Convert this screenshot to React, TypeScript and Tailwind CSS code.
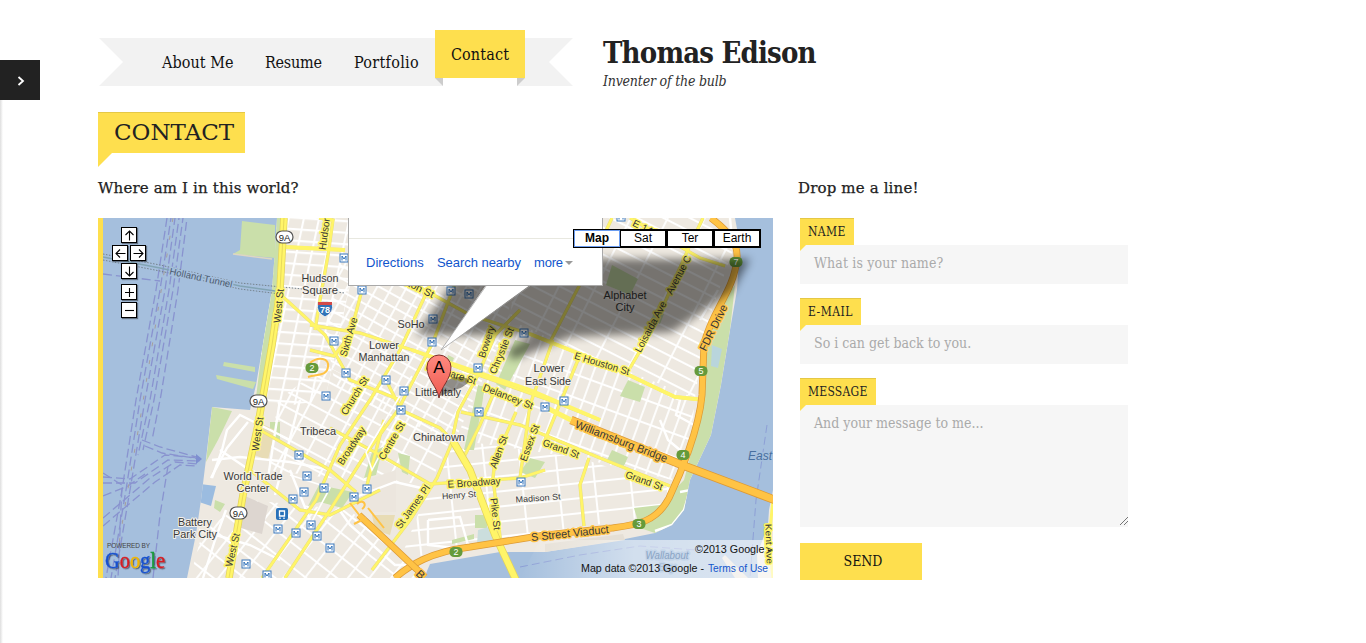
import React from "react";

const slab = "font-['DejaVu_Serif_Condensed','DejaVu_Serif',serif]";
const slabWide = "font-['DejaVu_Serif',serif]";

type Label = { t: string; x: number; y: number; w: number; r?: number; s?: number; halo?: string; fill?: string; italic?: boolean };

const Y = "#fff568";
const O = "#ffc345";
const labels: Label[] = [
  { t: "Holland Tunnel", x: 201, y: 281, w: 64, r: 12, s: 9.5, halo: "#a5bfdd", fill: "#4b5a6e" },
  { t: "Hudson", x: 320, y: 282, w: 37 },
  { t: "Square", x: 320, y: 294, w: 36 },
  { t: "SoHo", x: 411, y: 328, w: 27 },
  { t: "Lower", x: 384, y: 349, w: 30 },
  { t: "Manhattan", x: 384, y: 361, w: 51 },
  { t: "Little Italy", x: 438, y: 396, w: 46 },
  { t: "Lower", x: 549, y: 372, w: 31 },
  { t: "East Side", x: 548, y: 385, w: 46 },
  { t: "Alphabet", x: 625, y: 299, w: 43, halo: "#00000000" },
  { t: "City", x: 625, y: 311, w: 19, halo: "#00000000" },
  { t: "Chinatown", x: 439, y: 441, w: 52 },
  { t: "Tribeca", x: 318, y: 435, w: 36 },
  { t: "World Trade", x: 253, y: 480, w: 59 },
  { t: "Center", x: 253, y: 492, w: 33 },
  { t: "Battery", x: 195, y: 526, w: 34 },
  { t: "Park City", x: 195, y: 538, w: 44 },
  { t: "Henry St", x: 459, y: 498, w: 34, r: -4, s: 8.5 },
  { t: "Madison St", x: 538, y: 501, w: 45, r: -4, s: 8.5 },
  { t: "West St", x: 279, y: 309, w: 34, r: -84, s: 10, halo: Y },
  { t: "West St", x: 258, y: 437, w: 34, r: -82, s: 10, halo: Y },
  { t: "West St", x: 233, y: 553, w: 34, r: -77, s: 10, halo: Y },
  { t: "Hudson", x: 325, y: 236, w: 34, r: -82, s: 10, halo: Y },
  { t: "Sixth Ave", x: 349, y: 340, w: 40, r: -74, s: 10, halo: Y },
  { t: "Church St", x: 355, y: 399, w: 43, r: -58, s: 10, halo: Y },
  { t: "Broadway", x: 352, y: 449, w: 43, r: -57, s: 10, halo: Y },
  { t: "Centre St", x: 392, y: 444, w: 42, r: -60, s: 10, halo: Y },
  { t: "St James Pl", x: 413, y: 510, w: 51, r: -54, s: 10, halo: Y },
  { t: "Kenmare St", x: 451, y: 377, w: 52, r: 17, s: 10, halo: Y },
  { t: "Houston St", x: 410, y: 287, w: 52, r: 26, s: 10, halo: Y },
  { t: "Delancey St", x: 508, y: 400, w: 53, r: 21, s: 10, halo: Y },
  { t: "Bowery", x: 487, y: 345, w: 33, r: -72, s: 10, halo: Y },
  { t: "Chrystie St", x: 502, y: 354, w: 49, r: -68, s: 10, halo: Y },
  { t: "Allen St", x: 499, y: 455, w: 34, r: -70, s: 10, halo: Y },
  { t: "Essex St", x: 530, y: 446, w: 38, r: -70, s: 10, halo: Y },
  { t: "Pike St", x: 495, y: 517, w: 32, r: 84, s: 10, halo: Y },
  { t: "E Broadway", x: 474, y: 486, w: 53, r: -4, s: 10, halo: Y },
  { t: "E Houston St", x: 602, y: 367, w: 57, r: 17, s: 10, halo: Y },
  { t: "Grand St", x: 561, y: 452, w: 38, r: 20, s: 10, halo: Y },
  { t: "Grand St", x: 644, y: 484, w: 39, r: 20, s: 10, halo: Y },
  { t: "Loisaida Ave", x: 651, y: 330, w: 56, r: -62, s: 10, halo: Y },
  { t: "Avenue C", x: 679, y: 278, w: 42, r: -62, s: 10, halo: Y },
  { t: "E 14th St", x: 652, y: 235, w: 42, r: 26, s: 10, halo: Y },
  { t: "FDR Drive", x: 714, y: 331, w: 50, r: -64, s: 11, halo: O },
  { t: "Williamsburg Bridge", x: 621, y: 445, w: 98, r: 21, s: 11, halo: O },
  { t: "S Street Viaduct", x: 570, y: 537, w: 78, r: -6, s: 11, halo: O },
  { t: "B", x: 420, y: 578, w: 8, r: 43, s: 11, halo: O },
  { t: "Kent Ave", x: 769, y: 547, w: 40, r: 88, s: 9, halo: Y },
  { t: "East", x: 760, y: 460, w: 24, s: 12, fill: "#486f9f", halo: "#a5bfdd", italic: true },
  { t: "Wallabout", x: 667, y: 559, w: 43, s: 10.5, fill: "#8aa4c4", halo: "#c4d5e9", italic: true },
  { t: "Bay", x: 667, y: 571, w: 17, s: 10.5, fill: "#a9bdd6", halo: "#c4d5e9", italic: true },
];

const metros = [
  [344, 258], [362, 290], [334, 341], [346, 373], [326, 396], [386, 380], [404, 391], [432, 342], [433, 319], [451, 291],
  [469, 294], [524, 333], [478, 368], [621, 217], [564, 401], [299, 455], [307, 476], [324, 488], [304, 492], [293, 499],
  [278, 529], [296, 533], [311, 525], [317, 536], [246, 564], [267, 575], [401, 410], [479, 412], [367, 489], [354, 497],
  [330, 548], [521, 482], [545, 407],
];

const yellowStreets = [
  "M319 218L333 220L328 255L320 300L315 330",
  "M285 247L345 250",
  "M282 296L325 335L350 380L400 400",
  "M372 218L362 290L350 335L334 356L310 350",
  "M310 325L360 333L412 350L470 372L560 404L600 420",
  "M360 262L410 282L470 315L530 334L610 366L675 397L705 400",
  "M480 218L433 342L398 410L365 455L330 510L285 578",
  "M430 285L400 350L370 400L340 445L316 500L262 578",
  "M520 310L495 335L478 375L458 412L452 440",
  "M495 390L480 425L465 455",
  "M386 380L401 410L440 428L452 440",
  "M453 440L437 478L410 520L372 570",
  "M260 430L330 470L356 492",
  "M330 428L380 455L430 484L520 478L545 470",
  "M250 470L300 510L330 515L380 490",
  "M516 412L495 460L493 478L501 545",
  "M553 340L530 405L520 478",
  "M580 355L545 440",
  "M461 412L520 425L600 458L670 486",
  "M589 458L580 485L584 526",
  "M630 368L655 325L690 245L703 218",
  "M550 342L590 265L612 218",
  "M630 218L700 258L725 266",
  "M384 420L366 489",
];

const pale = ["M412 376L366 452L372 470L384 447", "M290 475L330 488L310 525"];

const coast =
  "M277 218H735L740 245L737 290L730 330L721 385L711 435L690 480L684 510L672 525L655 533L620 540L545 552L500 552L430 564L424 578H187L196 534L201 500L206 459L212 407L250 410L256 385L262 350L272 290L275 250Z";

function Shape({ x, y, n }: { x: number; y: number; n: string }) {
  return (
    <g>
      <rect x={x - 6.5} y={y - 5} width={13} height={10} rx={4.5} fill="#659a3b" />
      <text x={x} y={y + 3.2} textAnchor="middle" fontSize={9} fill="#fff">{n}</text>
    </g>
  );
}

function MapDrawing() {
  return (
    <svg viewBox="103 218 670 360" className="block h-[360px] w-[670px] font-['Liberation_Sans',sans-serif]">
      <defs>
        <clipPath id="land"><path d={coast} /></clipPath>
        <pattern id="gWest" width="15" height="11.5" patternUnits="userSpaceOnUse" patternTransform="rotate(4) skewX(-8)">
          <path d="M0 1H15M1 0V11.5" stroke="#fff" strokeWidth="2.2" />
        </pattern>
        <pattern id="gSoho" width="26" height="11" patternUnits="userSpaceOnUse" patternTransform="rotate(29)">
          <path d="M0 1H26M1 0V11M14 0V11" stroke="#fff" strokeWidth="1.8" />
        </pattern>
        <pattern id="gEast" width="33" height="12" patternUnits="userSpaceOnUse" patternTransform="rotate(27)">
          <path d="M0 1H33M1 0V12" stroke="#fff" strokeWidth="1.8" />
        </pattern>
        <pattern id="gLes" width="12" height="22" patternUnits="userSpaceOnUse" patternTransform="rotate(20)">
          <path d="M0 1H12M1 0V22" stroke="#fff" strokeWidth="1.8" />
        </pattern>
        <pattern id="gSouth" width="36" height="15" patternUnits="userSpaceOnUse" patternTransform="rotate(-6)">
          <path d="M0 1H36M1 0V15" stroke="#fff" strokeWidth="1.9" />
        </pattern>
        <pattern id="gFin" width="17" height="19" patternUnits="userSpaceOnUse" patternTransform="rotate(38)">
          <path d="M0 1H17M1 0V19" stroke="#fff" strokeWidth="1.8" />
        </pattern>
        <pattern id="gTri" width="21" height="14" patternUnits="userSpaceOnUse" patternTransform="rotate(28)">
          <path d="M0 1H21M1 0V14" stroke="#fff" strokeWidth="1.9" />
        </pattern>
        <filter id="soft" x="-10%" y="-20%" width="120%" height="140%"><feGaussianBlur stdDeviation="4.5" /></filter>
        <filter id="drop" x="-10%" y="-20%" width="120%" height="150%"><feDropShadow dx="1.2" dy="1.2" stdDeviation="0.5" floodOpacity=".45" /></filter>
        <linearGradient id="fade"><stop offset="0" stopColor="#fff" stopOpacity="0" /><stop offset=".45" stopColor="#fff" stopOpacity=".5" /><stop offset="1" stopColor="#fff" stopOpacity=".6" /></linearGradient>
        <linearGradient id="pin" x1="0" y1="0" x2="0" y2="1"><stop offset="0" stopColor="#ff8a80" /><stop offset="1" stopColor="#ee5a50" /></linearGradient>
      </defs>
      <rect x="103" y="218" width="670" height="360" fill="#a5bfdd" />

      <g stroke="#8993cf" strokeWidth="1.3" strokeDasharray="9 4" fill="none">
        <path d="M167 218L156 290L136 400L122 490L106 578" />
        <path d="M171 218L160 290L140 400L126 490L111 578" strokeDashoffset="5" />
        <path d="M175 218L165 290L145 400L130 490L115 578" strokeDashoffset="2" />
        <path d="M179 218L169 290L150 400L138 455" strokeDashoffset="7" />
        <path d="M183 218L173 290L154 400L143 450" strokeDashoffset="4" />
        <path d="M187 218L178 290L161 395L152 440" strokeDashoffset="9" />
        <path d="M103 274L160 281" />
        <path d="M142 440L160 447L200 458M145 446L162 453L200 459M103 477L130 479L165 455L200 458M103 483L135 483L168 460L200 461M103 518L150 478L175 462L198 464M103 526L155 482L180 465L198 466M103 496L128 486L145 474" />
        <path d="M168 466L160 515L153 578M103 473L122 485L118 578" />
      </g>
      <path d="M173 218L158 310L140 420L126 500L118 550" stroke="#a79f9b" strokeDasharray="4 14" fill="none" />
      <path d="M196 454L202 459L196 464Z" fill="#7d8fd0" />

      <path d={coast} fill="#eee9e1" />
      <g clipPath="url(#land)">
        <path d="M278 218H355V262L325 400L260 410V350Z" fill="url(#gWest)" />
        <path d="M358 218H500L510 320L455 440L400 420L335 385L325 330L340 262Z" fill="url(#gSoho)" />
        <path d="M520 218H715L733 250L705 330L695 398L575 350L510 320Z" fill="url(#gEast)" />
        <path d="M510 320L575 350L695 398L692 430L672 480L580 458L457 440L478 375Z" fill="url(#gLes)" />
        <path d="M457 440L580 458L670 487L658 515L500 540L400 560L430 484Z" fill="url(#gSouth)" />
        <path d="M325 365L400 405L450 440L430 484L345 480L268 470L278 400Z" fill="url(#gTri)" />
        <path d="M250 500L350 510L420 578H190L203 530Z" fill="url(#gFin)" />

        <g fill="#cadfaa">
          <path d="M212 407L232 411L218 440L206 462Z" />
          <path d="M275 218H281L274 330L262 400L255 405L262 350Z" />
          <path d="M735 285L730 330L721 385L711 435L690 480L684 510L672 525L655 533L640 528L634 508L660 505L684 480L700 420L704 345L724 300Z" />
          <path d="M319 485L353 492L342 508L320 502L308 506Z" />
          <path d="M372 452L383 447L376 475L364 478Z" />
          <path d="M398 453L410 456L408 475L402 472Z" />
          <path d="M478 385L485 387L474 450L464 450Z" />
          <path d="M515 340L530 344L505 390L496 384Z" />
          <path d="M612 265L638 279L630 295L606 285Z" />
          <path d="M530 458L545 462L535 478L520 472Z" />
          <path d="M628 380L645 387L640 402L620 396Z" />
          <path d="M475 515H487V528H475Z" />
          <path d="M270 422H280V440H270ZM215 500L225 504L220 512L214 508Z" />
          <path d="M448 355L454 358L450 368L445 365ZM655 310L664 314L660 324L651 320Z" />
          <path d="M612 450L628 457L624 466L607 460ZM452 540L474 534V539L452 544Z" />
        </g>
        <path d="M478 530L492 526L496 541L477 545Z" fill="#cbdedd" />
        <path d="M712 345L722 349L718 368L711 366Z" fill="#b9d5dc" />
        <path d="M245 496L268 506L262 534L237 527Z" fill="#ddd6d0" />
        <path d="M260 423L275 430L268 460L254 455Z" fill="#e8dcb5" />
        <path d="M372 515L395 515L390 535L375 530Z" fill="#e8dcb5" />
        <path d="M372 478L396 470L396 512L372 512L362 502Z" fill="#ece6de" />
        <path d="M200 484L216 486L211 506L199 502Z" fill="#9bbce0" />
        <g fill="none" stroke="#fff" strokeWidth="2.4">
          <path d="M212 478L222 450L227 430L240 415L258 424L290 440" />
          <path d="M212 460L240 457L290 462L330 470M220 450L245 467L270 480" />
          <path d="M248 422L227 448L211 478" />
          <path d="M226 510L215 540L203 578M199 530L250 545L280 560" />
          <path d="M338 508L350 525L395 565L410 565M356 497L395 482L430 490" />
          <path d="M428 520L460 517L468 545M428 520V545L455 548" />
          <path d="M680 492L690 490L684 510L672 525L655 531" />
          <path d="M280 400L268 478M300 400L275 495M290 470L310 520" />
          <path d="M668 395L680 400L676 415L694 425M660 420L668 440L680 450" />
          <path d="M730 218L733 250M718 290L700 320" />
        </g>
      </g>

      <g fill="#cadfaa">
        <path d="M242 221L275 225V258L233 254L240 250Z" />
        <path d="M224 362L255 367L255 372L223 366Z" />
        <path d="M216 375L256 382L253 389L217 379Z" />
      </g>
      <path d="M233 254L272 259" stroke="#ded6c3" strokeWidth="1.5" />
      <path d="M773 490L769 510L768 525L757 555L758 578H773Z" fill="#eee9e1" />
      <path d="M725 555L748 578H735L722 558Z" fill="#e7e2da" />
      <path d="M767 425L756 500L750 578" stroke="#8d9fd6" strokeDasharray="8 4" fill="none" />
      <path d="M520 567L580 555L640 546L710 551" stroke="#8d9fd6" strokeDasharray="8 4" fill="none" />
      <path d="M545 544L623 534L625 540L545 552Z" fill="#e5dfd5" />

      <g fill="none" strokeDasharray="1.5 1.5" stroke="#75828d">
        <path d="M103 254L160 265L240 283L345 293" />
        <path d="M103 260L160 271L240 289L280 294" />
      </g>
      <path d="M103 257L160 268L240 286L275 291" stroke="#82a4b4" strokeWidth="1.4" fill="none" />

      <g clipPath="url(#land)" fill="none">
        <g stroke="#e7dc83" strokeWidth="3.4">{yellowStreets.map((d) => <path key={d} d={d} />)}</g>
        <g stroke={Y} strokeWidth="2.5">{yellowStreets.map((d) => <path key={d} d={d} />)}</g>
        <g stroke="#fff" strokeWidth="1.6">{pale.map((d) => <path key={d} d={d} />)}</g>
        <path d="M285 247L345 250M412 350L530 390L600 420M530 334L610 366L675 397L705 400" stroke={Y} strokeWidth="3.8" />
      </g>
      <path d="M284 218L280 290L272 345L258 425L243 495L229 578" stroke="#e4d45b" strokeWidth="7.5" fill="none" />
      <path d="M284 218L280 290L272 345L258 425L243 495L229 578" stroke={Y} strokeWidth="6" fill="none" />
      <path d="M284 218L280 290L272 345L258 425L243 495L229 578" stroke="#e8d95c" strokeWidth="1" fill="none" />
      <path d="M453 441L470 470L495 535L516 580" stroke="#e4d45b" strokeWidth="7.5" fill="none" />
      <path d="M453 441L470 470L495 535L516 580" stroke={Y} strokeWidth="6" fill="none" />
      <path d="M773 500L769 540L773 578" stroke={Y} strokeWidth="3" fill="none" />

      <g fill="none" strokeLinejoin="round">
        <path d="M310 363C318 356 330 358 328 367C327 376 318 374 308 377" stroke="#ffc345" strokeWidth="2" />
        <g stroke="#dd9a35" strokeWidth="7">
          <path d="M711 218C728 231 738 242 737 258C734 292 712 310 704 344L702 395C699 430 680 475 669 498C656 523 635 525 612 528L545 535L470 547C430 552 410 565 395 578" />
          <path d="M571 420L682 465L775 500" strokeWidth="8.5" />
        </g>
        <g stroke={O} strokeWidth="5.5">
          <path d="M711 218C728 231 738 242 737 258C734 292 712 310 704 344L702 395C699 430 680 475 669 498C656 523 635 525 612 528L545 535L470 547C430 552 410 565 395 578" />
          <path d="M571 420L682 465L775 500" strokeWidth="7" />
        </g>
        <path d="M545 407L571 420" stroke={Y} strokeWidth="5" />
        <path d="M359 515L425 577" stroke="#dd9a35" strokeWidth="7" />
        <path d="M359 515L425 577" stroke={O} strokeWidth="5.5" />
        <path d="M350 503L360 516M357 504C363 498 368 505 362 509M368 508L384 528M354 524L366 518" stroke={O} strokeWidth="2" />
      </g>
      <path d="M540 540H773V578H520Z" fill="url(#fade)" />

      {labels.map((l, i) => (
        <text key={i} x={l.x} y={l.y} transform={l.r ? `rotate(${l.r} ${l.x} ${l.y - 3})` : undefined}
          textAnchor="middle" fontSize={l.s ?? 11} textLength={l.w} lengthAdjust="spacingAndGlyphs"
          fill={l.fill ?? "#383838"} stroke={l.halo ?? "#f4f1eb"} strokeWidth={l.halo ? 3 : 2} strokeLinejoin="round"
          paintOrder="stroke" fontStyle={l.italic ? "italic" : undefined}>{l.t}</text>
      ))}

      {metros.map(([x, y]) => (
        <g key={`${x}-${y}`}>
          <rect x={x - 4} y={y - 4} width="8" height="8" fill="#fff" stroke="#3a78bd" />
          <path d={`M${x - 2} ${y + 2.5}V${y - 2}L${x} ${y + 1}L${x + 2} ${y - 2}V${y + 2.5}`} fill="none" stroke="#2f70b8" strokeWidth="1" />
        </g>
      ))}
      <rect x="276" y="508" width="12" height="12" rx="2" fill="#2871b9" />
      <path d="M279.500 511H284.500V516H279.500ZM280 517.500V519M284 517.500V519" fill="none" stroke="#fff" strokeWidth="1.3" />
      {[[284, 237], [258, 401], [238, 513]].map(([x, y]) => (
        <g key={y}>
          <rect x={x - 8} y={y - 6} width="17" height="12" rx="6" fill="#fff" stroke="#555" strokeWidth="1.2" />
          <text x={x + 0.5} y={y + 3.5} textAnchor="middle" fontSize="9.5" fill="#222">9A</text>
        </g>
      ))}
      <path d="M318 303Q325 300 332 303Q335 312 325 317Q315 312 318 303Z" fill="#3173b8" stroke="#eee" />
      <path d="M318 302H332V305H318Z" fill="#d34a48" />
      <text x="325" y="313" textAnchor="middle" fontSize="9" fontWeight="bold" fill="#fff">78</text>
      <Shape x={312} y={368} n="2" /><Shape x={456} y={552} n="2" /><Shape x={639} y={524} n="3" />
      <Shape x={683} y={455} n="4" /><Shape x={701} y={371} n="5" /><Shape x={736} y={262} n="7" />

      <path d="M470 259H750L732 292L672 332L570 337L512 360L508 350L533 335H416Z" fill="#000" opacity=".5" filter="url(#soft)" />
      <path d="M440 396C442 378 456 374 469 379C470 386 455 390 440 396Z" fill="#000" opacity=".4" />
      <path d="M486 285L441 350L530 285Z" fill="#fff" />
      <path d="M486 286L441 350L530 286" fill="none" stroke="#999" strokeWidth=".7" />
      <path d="M439 398C437 386 427 380 427 367A12 12 0 0 1 451 367C451 380 441 386 439 398Z" fill="url(#pin)" stroke="#7e302c" strokeWidth="1" />
      <text x="439" y="373" textAnchor="middle" fontSize="17" fill="#000">A</text>

      <text x="105" y="568" fontFamily="Liberation Serif" fontSize="24" textLength="60" lengthAdjust="spacingAndGlyphs" strokeWidth=".4" filter="url(#drop)">
        <tspan fill="#1851ce" stroke="#1851ce">G</tspan><tspan fill="#d61d24" stroke="#d61d24">o</tspan><tspan fill="#f2b500" stroke="#f2b500">o</tspan><tspan fill="#1851ce" stroke="#1851ce">g</tspan><tspan fill="#159b3b" stroke="#159b3b">l</tspan><tspan fill="#d61d24" stroke="#d61d24">e</tspan>
      </text>
      <text x="107" y="548" fontSize="6.500" textLength="43" fill="#444">POWERED BY</text>
      <g fontSize="10">
        <text x="695" y="553" textLength="76" lengthAdjust="spacingAndGlyphs" fill="#111">©2013 Google -</text>
        <text x="581" y="572" textLength="123" lengthAdjust="spacingAndGlyphs" fill="#111">Map data ©2013 Google -</text>
        <text x="708" y="572" textLength="60" lengthAdjust="spacingAndGlyphs" fill="#15c">Terms of Use</text>
      </g>
    </svg>
  );
}

function Control({ d, pos }: { d: string; pos: string }) {
  return (
    <button className={`absolute ${pos} flex size-4 items-center justify-center border border-black bg-white shadow-[1px_1px_1px_#0006]`}>
      <svg viewBox="0 0 13 13" className="size-[13px] shrink-0" fill="none" stroke="#000" strokeWidth="1.1"><path d={d} /></svg>
    </button>
  );
}

function MapPanel() {
  return (
    <div className="relative mt-[18px] h-[360px] w-[675px] overflow-hidden border-l-[5px] border-[#fedf4e] font-['Liberation_Sans',sans-serif]">
      <MapDrawing />
      <div className="absolute top-0 left-[245px] h-[68px] w-[255px] border border-t-0 border-[#a9a9a9] bg-white text-[13px] text-[#15c]">
        <div className="h-[21px] border-b border-[#e8e8e0]" />
        <div className="flex items-center pt-[14px] pl-[17px] leading-[20px]">
          <span className="w-[71px] whitespace-nowrap">Directions</span>
          <span className="w-[97px] whitespace-nowrap tracking-[-0.05px]">Search nearby</span>
          <span className="tracking-[-0.2px]">more</span>
          <span className="ml-[2px] border-x-4 border-t-4 border-x-transparent border-t-[#999]" />
        </div>
      </div>
      <div className="absolute top-[11px] left-[470px] flex text-[12px] leading-[15px] text-black">
        <span className="flex h-[19px] w-[48px] items-center justify-center border-2 border-black bg-white font-bold outline-1 -outline-offset-2 outline-[#6c9df0]">Map</span>
        <span className="flex h-[19px] w-[46px] items-center justify-center border-2 border-l-0 border-black bg-white">Sat</span>
        <span className="flex h-[19px] w-[47px] items-center justify-center border-2 border-l-1 border-black bg-white">Ter</span>
        <span className="flex h-[19px] w-[47px] items-center justify-center border-2 border-l-1 border-black bg-white">Earth</span>
      </div>
      <Control pos="top-[9px] left-[18px]" d="M6.5 11.5V2M2.5 6L6.5 2L10.5 6" />
      <Control pos="top-[27px] left-[9px]" d="M11.5 6.5H2M6 2.5L2 6.5L6 10.5" />
      <Control pos="top-[27px] left-[27px]" d="M1.5 6.5H11M7 2.5L11 6.5L7 10.5" />
      <Control pos="top-[45px] left-[18px]" d="M6.5 1.5V11M2.5 7L6.5 11L10.5 7" />
      <Control pos="top-[66px] left-[18px]" d="M6.5 2V11M2 6.5H11" />
      <Control pos="top-[84px] left-[18px]" d="M2 6.5H11" />
    </div>
  );
}

function FieldLabel({ children, w, ls }: { children: string; w: string; ls: string }) {
  return (
    <div className={`relative z-10 flex h-[27px] items-center border-t border-[#e5c846] bg-[#fedf4e] pl-2 text-[12px] text-[#222] ${w} ${ls}`}>
      <span className="whitespace-nowrap">{children}</span>
      <span className="absolute top-full left-0 size-[6px] bg-[#fedf4e] [clip-path:polygon(0_0,100%_0,0_100%)]" />
    </div>
  );
}

function NavItem({ children, w, ls }: { children: string; w: string; ls: string }) {
  return <a className={`pt-[2px] whitespace-nowrap ${w} ${ls}`}>{children}</a>;
}

export default function App() {
  return (
    <div className={`flex h-[643px] w-full overflow-hidden bg-white text-[#222] ${slab}`}>
      <aside className="flex w-[98px] shrink-0 flex-col pt-[60px]">
        <button className="flex size-10 items-center justify-center bg-[#222]">
          <svg viewBox="0 0 8 10" className="mt-px ml-[2px] h-[10px] w-2" fill="none" stroke="#fff" strokeWidth="1.8"><path d="M1.5 1L6 5L1.5 9" /></svg>
        </button>
        <div className="w-[3px] grow bg-gradient-to-r from-[#dedede] to-white" />
      </aside>
      <div className="flex flex-col">
        <header className="flex h-[112px] pt-[30px]">
          <nav className="relative mt-2 flex h-12 w-[475px] items-center text-[16px] text-[#111]">
            <div className="absolute inset-0 bg-[#f2f2f2] [clip-path:polygon(1px_0,100%_0,calc(100%-24px)_50%,100%_100%,1px_100%,25px_50%)]" />
            <div className="relative flex h-full items-center pl-[64px]">
              <NavItem w="w-[103px]" ls="tracking-[0.05px]">About Me</NavItem>
              <NavItem w="w-[89px]" ls="tracking-[-0.25px]">Resume</NavItem>
              <NavItem w="w-[81px]" ls="tracking-[0.3px]">Portfolio</NavItem>
              <div className="relative -mt-4 flex h-12 w-[90px] items-center justify-center bg-[#fedf4e]">
                <span className="pt-[2px] tracking-[0.15px]">Contact</span>
                <span className="absolute top-full left-0 size-2 bg-[#ccc] [clip-path:polygon(0_0,100%_0,100%_100%)]" />
                <span className="absolute top-full left-2 h-2 w-[74px] bg-white" />
                <span className="absolute top-full right-0 size-2 bg-[#ccc] [clip-path:polygon(0_0,100%_0,0_100%)]" />
              </div>
            </div>
          </nav>
          <div className="ml-[30px] flex flex-col">
            <h1 className="mt-[5px] text-[29px] leading-[36px] font-bold tracking-[-0.8px]">Thomas Edison</h1>
            <p className="text-[14px] leading-[20px] tracking-[-0.2px] text-[#333] italic">Inventer of the bulb</p>
          </div>
        </header>
        <div className={`relative flex h-[41px] w-[147px] items-center border-t border-[#e5c846] bg-[#fedf4e] pb-[2px] pl-4 ${slabWide}`}>
          <h2 className="text-[23px] leading-none">CONTACT</h2>
          <span className="absolute top-full left-0 size-[14px] bg-[#fedf4e] [clip-path:polygon(0_0,100%_0,0_100%)]" />
        </div>
        <main className="mt-[25px] flex">
          <section className="w-[700px]">
            <h3 className={`h-[22px] text-[15px] leading-[20px] tracking-[0.15px] [-webkit-text-stroke:0.25px_#222] ${slabWide}`}>Where am I in this world?</h3>
            <MapPanel />
          </section>
          <section className="w-[330px]">
            <h3 className={`h-[22px] text-[15px] leading-[20px] tracking-[0.15px] [-webkit-text-stroke:0.25px_#222] ${slabWide}`}>Drop me a line!</h3>
            <form className="mt-[18px] ml-[2px] flex w-[328px] flex-col text-[14px] text-[#aaa]">
              <FieldLabel w="w-[54px]" ls="tracking-[0.4px]">NAME</FieldLabel>
              <div className="mb-[14px] flex h-[39px] items-center bg-[#f6f6f6] px-[14px] pb-[2px] tracking-[0.15px]">What is your name?</div>
              <FieldLabel w="w-[61px]" ls="tracking-[0.5px]">E-MAIL</FieldLabel>
              <div className="mb-[14px] flex h-[39px] items-center bg-[#f6f6f6] px-[14px] pb-[2px]">So i can get back to you.</div>
              <FieldLabel w="w-[76px]" ls="tracking-[0.25px]">MESSAGE</FieldLabel>
              <div className="flex h-[122px] justify-between bg-[#f6f6f6] pt-[8px] pl-[14px] leading-[20px]">
                And your message to me...
                <svg viewBox="0 0 8 8" className="mb-[2px] size-2 self-end" stroke="#555" strokeWidth=".8"><path d="M0 8L8 0M4 8L8 4" /></svg>
              </div>
              <button type="button" className="mt-4 flex h-[37px] w-[122px] items-center justify-center bg-[#fedf4e] pl-1 text-[14px] text-[#111]">SEND</button>
            </form>
          </section>
        </main>
      </div>
    </div>
  );
}
